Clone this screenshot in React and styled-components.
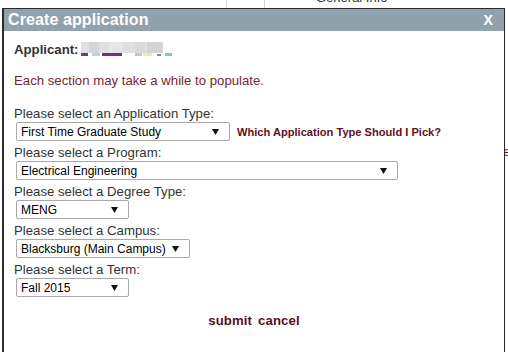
import React from "react";
import styled, { createGlobalStyle } from "styled-components";

const Global = createGlobalStyle`
  html, body { margin: 0; padding: 0; background: #fff; }
  body { font-family: "Liberation Sans", Arial, sans-serif; width: 508px; height: 352px; overflow: hidden; }
`;

const Page = styled.div`
  position: relative;
  width: 508px;
  height: 352px;
  overflow: hidden;
  background: #fff;
`;

const BgLine = styled.div`
  position: absolute;
  left: ${(p) => p.x}px;
  top: 0;
  width: 1px;
  height: 8px;
  background: #d8d8d8;
`;

const BgText = styled.div`
  position: absolute;
  left: ${(p) => p.x}px;
  top: ${(p) => p.y}px;
  font-size: 13px;
  color: ${(p) => p.color || "#333"};
  white-space: nowrap;
`;

const Dialog = styled.div`
  position: absolute;
  left: 2px;
  top: 8px;
  width: 500px;
  height: 360px;
  border: 1px solid #2b2b2b;
  border-left-width: 2px;
  background: #fff;
  box-sizing: content-box;
`;

const TitleBar = styled.div`
  height: 22px;
  background: #8fa2ad;
  display: flex;
  align-items: center;
  justify-content: space-between;
  padding: 0 11px 0 4px;
  color: #fff;
  font-weight: bold;
  font-size: 16px;
  letter-spacing: 0.1px;
`;

const Close = styled.span`
  font-size: 14px;
  font-weight: bold;
`;

const Body = styled.div`
  padding: 10px 10px 0 10px;
  color: #333;
  font-size: 13.2px;
`;

const Applicant = styled.div`
  display: flex;
  align-items: center;
  gap: 3px;
  height: 16px;
  font-weight: bold;
  font-size: 13.2px;
  color: #333;
`;

const Notice = styled.div`
  margin-top: 16px;
  line-height: 16px;
  color: #7a1f30;
`;

const Form = styled.div`
  margin-top: 17px;
  display: flex;
  flex-direction: column;
`;

const Label = styled.div`
  line-height: 16px;
  color: #333;
`;

const Row = styled.div`
  display: flex;
  align-items: center;
  gap: 7px;
  margin-bottom: 4px;
`;

const SelectBox = styled.div`
  margin-left: 2px;
  width: ${(p) => p.w}px;
  height: 19px;
  box-sizing: border-box;
  border: 1px solid #a9a9a9;
  border-radius: 2px;
  display: flex;
  align-items: center;
  justify-content: space-between;
  padding: 0 10px 0 4px;
  font-size: 12px;
  color: #000;
  background: #fff;
`;

const Arrow = styled.svg`
  width: 7px;
  height: 6px;
  flex: none;
`;

const Help = styled.span`
  font-size: 11.1px;
  font-weight: bold;
  color: #5e1020;
`;

const Actions = styled.div`
  margin-top: 12px;
  display: flex;
  justify-content: center;
  gap: 6px;
  font-size: 13.2px;
  letter-spacing: 0.1px;
  font-weight: bold;
  color: #5a0f1b;
`;

const Select = ({ w, value }) => (
  <SelectBox w={w}>
    <span>{value}</span>
    <Arrow viewBox="0 0 7 6">
      <path d="M0 0 H7 L3.5 6 Z" fill="#111" />
    </Arrow>
  </SelectBox>
);

const Blur = () => (
  <svg width="92" height="15" viewBox="0 0 92 15">
    <rect x="0" y="0" width="82" height="11" fill="#e0dfe2" />
    <rect x="8" y="0" width="10" height="11" fill="#d6d4da" />
    <rect x="28" y="0" width="14" height="11" fill="#e6e6e6" />
    <rect x="54" y="0" width="10" height="11" fill="#d9dad8" />
    <rect x="66" y="0" width="16" height="11" fill="#d4d4d6" />
    <rect x="0" y="11" width="7" height="3" fill="#6c3a8c" />
    <rect x="11" y="11" width="8" height="3" fill="#a9d9ee" />
    <rect x="21" y="11" width="6" height="3" fill="#7b2c72" />
    <rect x="27" y="11" width="14" height="3" fill="#6a3192" />
    <rect x="54" y="11" width="7" height="3" fill="#b6d1b1" />
    <rect x="62" y="11" width="9" height="3" fill="#f4e7b2" />
    <rect x="76" y="12" width="4" height="2" fill="#888" />
    <rect x="84" y="11" width="7" height="3" fill="#7fc2f1" />
  </svg>
);

export default function App() {
  return (
    <Page>
      <Global />
      <BgLine x={226} />
      <BgLine x={264} />
      <BgText x={316} y={-10}>General Info</BgText>
      <BgText x={503} y={144} color="#6b1a2a">e</BgText>
      <Dialog>
        <TitleBar>
          <span>Create application</span>
          <Close>X</Close>
        </TitleBar>
        <Body>
          <Applicant>
            <span>Applicant:</span>
            <Blur />
          </Applicant>
          <Notice>Each section may take a while to populate.</Notice>
          <Form>
            <Label>Please select an Application Type:</Label>
            <Row>
              <Select w={214} value="First Time Graduate Study" />
              <Help>Which Application Type Should I Pick?</Help>
            </Row>
            <Label>Please select a Program:</Label>
            <Row>
              <Select w={382} value="Electrical Engineering" />
            </Row>
            <Label>Please select a Degree Type:</Label>
            <Row>
              <Select w={113} value="MENG" />
            </Row>
            <Label>Please select a Campus:</Label>
            <Row>
              <Select w={174} value="Blacksburg (Main Campus)" />
            </Row>
            <Label>Please select a Term:</Label>
            <Row>
              <Select w={113} value="Fall 2015" />
            </Row>
          </Form>
          <Actions>
            <span>submit</span>
            <span>cancel</span>
          </Actions>
        </Body>
      </Dialog>
    </Page>
  );
}
